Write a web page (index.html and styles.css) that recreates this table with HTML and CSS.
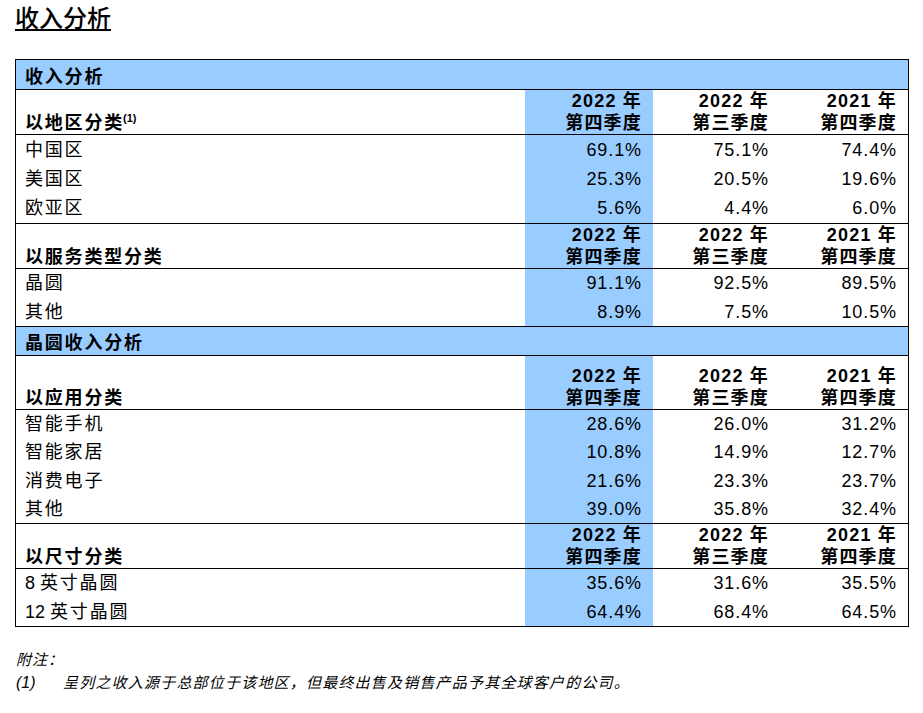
FILE: index.html
```html
<!DOCTYPE html>
<html lang="zh-CN">
<head>
<meta charset="utf-8">
<title>收入分析</title>
<link rel="stylesheet" href="styles.css">
</head>
<body>
<div class="page">
  <div class="title-wrap"><h1 class="title"><span class="ul">收入分析</span></h1></div>

  <div class="tbl">
    <div class="band"><div class="lbl b">收入分析</div></div>

    <div class="row head h44">
      <div class="lbl b"><span>以地区分类<sup class="sup">(1)</sup></span></div>
      <div class="num b blue">2022 年<br>第四季度</div>
      <div class="num b">2022 年<br>第三季度</div>
      <div class="num b">2021 年<br>第四季度</div>
    </div>
    <div class="sec s3">
      <div class="row"><div class="lbl">中国区</div><div class="num blue">69.1%</div><div class="num">75.1%</div><div class="num">74.4%</div></div>
      <div class="row"><div class="lbl">美国区</div><div class="num blue">25.3%</div><div class="num">20.5%</div><div class="num">19.6%</div></div>
      <div class="row"><div class="lbl">欧亚区</div><div class="num blue">5.6%</div><div class="num">4.4%</div><div class="num">6.0%</div></div>
    </div>

    <div class="row head h44">
      <div class="lbl b"><span>以服务类型分类</span></div>
      <div class="num b blue">2022 年<br>第四季度</div>
      <div class="num b">2022 年<br>第三季度</div>
      <div class="num b">2021 年<br>第四季度</div>
    </div>
    <div class="sec s2">
      <div class="row"><div class="lbl">晶圆</div><div class="num blue">91.1%</div><div class="num">92.5%</div><div class="num">89.5%</div></div>
      <div class="row"><div class="lbl">其他</div><div class="num blue">8.9%</div><div class="num">7.5%</div><div class="num">10.5%</div></div>
    </div>

    <div class="band band2"><div class="lbl b">晶圆收入分析</div></div>

    <div class="row head h53">
      <div class="lbl b"><span>以应用分类</span></div>
      <div class="num b blue">2022 年<br>第四季度</div>
      <div class="num b">2022 年<br>第三季度</div>
      <div class="num b">2021 年<br>第四季度</div>
    </div>
    <div class="sec s4">
      <div class="row"><div class="lbl">智能手机</div><div class="num blue">28.6%</div><div class="num">26.0%</div><div class="num">31.2%</div></div>
      <div class="row"><div class="lbl">智能家居</div><div class="num blue">10.8%</div><div class="num">14.9%</div><div class="num">12.7%</div></div>
      <div class="row"><div class="lbl">消费电子</div><div class="num blue">21.6%</div><div class="num">23.3%</div><div class="num">23.7%</div></div>
      <div class="row"><div class="lbl">其他</div><div class="num blue">39.0%</div><div class="num">35.8%</div><div class="num">32.4%</div></div>
    </div>

    <div class="row head h44">
      <div class="lbl b"><span>以尺寸分类</span></div>
      <div class="num b blue">2022 年<br>第四季度</div>
      <div class="num b">2022 年<br>第三季度</div>
      <div class="num b">2021 年<br>第四季度</div>
    </div>
    <div class="sec s2">
      <div class="row"><div class="lbl"><span class="n">8</span>英寸晶圆</div><div class="num blue">35.6%</div><div class="num">31.6%</div><div class="num">35.5%</div></div>
      <div class="row"><div class="lbl"><span class="n">12</span>英寸晶圆</div><div class="num blue">64.4%</div><div class="num">68.4%</div><div class="num">64.5%</div></div>
    </div>
  </div>

  <div class="notes">
    <div class="note-title">附注：</div>
    <div class="note"><span class="note-no">(1)</span><span class="note-text">呈列之收入源于总部位于该地区，但最终出售及销售产品予其全球客户的公司。</span></div>
  </div>
</div>
</body>
</html>
```

FILE: styles.css
```css
html, body {
  margin: 0;
  padding: 0;
  background: #fff;
}

body {
  font-family: "Liberation Sans", "Noto Sans CJK SC", sans-serif;
  color: #000;
}

.page {
  padding-left: 15px;
  width: 894px;
}

.title-wrap {
  height: 59px;
  box-sizing: border-box;
  padding-top: 5px;
}

.title {
  margin: 0;
  font-size: 24px;
  line-height: 28px;
  font-weight: 500;
}

.ul {
  text-decoration: underline;
  text-decoration-thickness: 1.5px;
  text-underline-offset: 2px;
}

.tbl {
  width: 894px;
  box-sizing: border-box;
  border: 1px solid #000;
}

.band {
  height: 29px;
  background: #99ccff;
  display: flex;
  align-items: center;
}

.band2 {
  height: 28px;
  border-top: 1px solid #000;
}

.row {
  display: grid;
  grid-template-columns: 509px 128px 127px 128px;
}

.head {
  border-top: 1px solid #000;
}

.h44 { height: 44px; }
.h53 { height: 53px; }

.head > div {
  height: 100%;
  box-sizing: border-box;
  display: flex;
  flex-direction: column;
  justify-content: flex-end;
  line-height: 22px;
}

.sec {
  border-top: 1px solid #000;
}

.s3 .row { height: 29.333px; }
.s2 .row { height: 28.5px; }
.s4 .row { height: 28.25px; }

.sec .row > div {
  display: flex;
  align-items: center;
  line-height: 20px;
}

.lbl {
  padding-left: 9px;
  font-size: 18px;
  letter-spacing: 1.8px;
  white-space: nowrap;
}

.n {
  letter-spacing: 0;
  margin-right: 5px;
}

.num {
  font-size: 18px;
  letter-spacing: 0.9px;
  text-align: right;
  padding-right: 11px;
  justify-content: flex-end;
  white-space: nowrap;
}

.head .num {
  align-items: flex-end;
  letter-spacing: 1.2px;
}

.b {
  font-weight: bold;
}

.blue {
  background: #99ccff;
}

.sup {
  font-size: 11px;
  font-weight: bold;
  letter-spacing: 0;
  vertical-align: 7px;
  line-height: 0;
  margin-left: -1px;
}

.notes {
  padding-top: 21px;
  padding-left: 1px;
  font-style: italic;
  font-size: 15px;
}

.note-title {
  line-height: 23px;
  letter-spacing: 1px;
}

.note {
  display: flex;
  line-height: 24px;
}

.note-no {
  width: 47px;
  flex: none;
  font-size: 16px;
}

.note-text {
  letter-spacing: 1.2px;
  white-space: nowrap;
}
```
